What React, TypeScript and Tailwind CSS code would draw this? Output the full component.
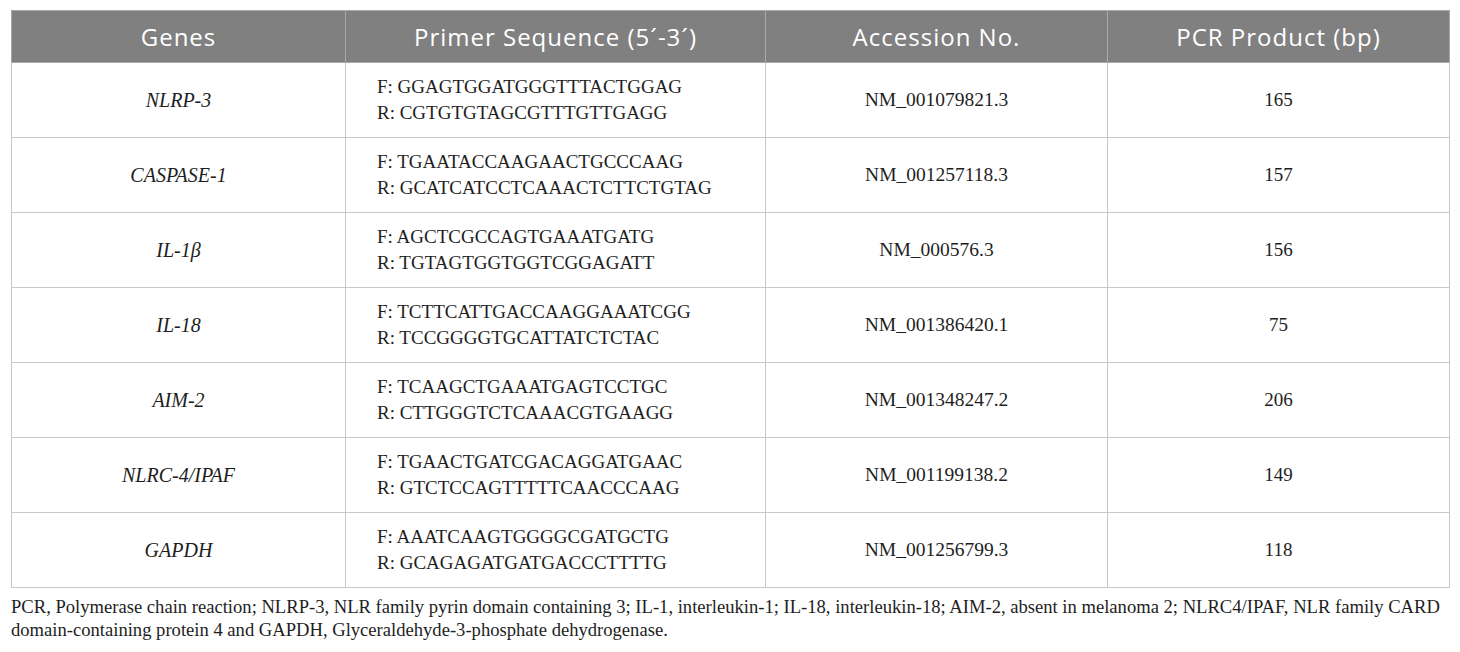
import React from "react";

const rows: [string, string, string, string, string][] = [
  ["NLRP-3", "F: GGAGTGGATGGGTTTACTGGAG", "R: CGTGTGTAGCGTTTGTTGAGG", "NM_001079821.3", "165"],
  ["CASPASE-1", "F: TGAATACCAAGAACTGCCCAAG", "R: GCATCATCCTCAAACTCTTCTGTAG", "NM_001257118.3", "157"],
  ["IL-1\u03B2", "F: AGCTCGCCAGTGAAATGATG", "R: TGTAGTGGTGGTCGGAGATT", "NM_000576.3", "156"],
  ["IL-18", "F: TCTTCATTGACCAAGGAAATCGG", "R: TCCGGGGTGCATTATCTCTAC", "NM_001386420.1", "75"],
  ["AIM-2", "F: TCAAGCTGAAATGAGTCCTGC", "R: CTTGGGTCTCAAACGTGAAGG", "NM_001348247.2", "206"],
  ["NLRC-4/IPAF", "F: TGAACTGATCGACAGGATGAAC", "R: GTCTCCAGTTTTTCAACCCAAG", "NM_001199138.2", "149"],
  ["GAPDH", "F: AAATCAAGTGGGGCGATGCTG", "R: GCAGAGATGATGACCCTTTTG", "NM_001256799.3", "118"],
];

const headers = ["Genes", "Primer Sequence (5\u00B4-3\u00B4)", "Accession No.", "PCR Product (bp)"];

export default function App() {
  return (
    <div className="w-[1460px] h-[652px] bg-white pt-[10px] px-[11px] font-['Liberation_Serif','Times_New_Roman',serif]">
      <table className="border-collapse w-[1438px] table-fixed text-[#1e1e1e] font-['Liberation_Serif','Times_New_Roman',serif]">
        <colgroup>
          <col className="w-[334px]" />
          <col className="w-[420px]" />
          <col className="w-[342px]" />
          <col className="w-[342px]" />
        </colgroup>
        <thead>
          <tr className="h-[52px] bg-[#808080] text-white text-[24px] tracking-[1px] font-['Open_Sans','Noto_Sans',sans-serif]">
            {headers.map((h) => (
              <th key={h} className="border border-[#a8a8a8] font-normal text-center align-middle p-0 leading-[28px]">
                {h}
              </th>
            ))}
          </tr>
        </thead>
        <tbody>
          {rows.map((r, i) => (
            <tr key={i} className="h-[75px]">
              <td className="border border-[#c8c8c8] text-center italic text-[20px] p-0">{r[0]}</td>
              <td className="border border-[#c8c8c8] pl-[31px] text-[19px] leading-[26px] py-0">
                <div>{r[1]}</div>
                <div>{r[2]}</div>
              </td>
              <td className="border border-[#c8c8c8] text-center text-[19.5px] p-0">{r[3]}</td>
              <td className="border border-[#c8c8c8] text-center text-[19px] p-0">{r[4]}</td>
            </tr>
          ))}
        </tbody>
      </table>
      <p className="mt-[7px] text-[18.6px] leading-[23px] text-[#1e1e1e]">
        PCR, Polymerase chain reaction; NLRP-3, NLR family pyrin domain containing 3; IL-1, interleukin-1; IL-18, interleukin-18; AIM-2, absent in melanoma 2; NLRC4/IPAF, NLR family CARD domain-containing protein 4 and GAPDH, Glyceraldehyde-3-phosphate dehydrogenase.
      </p>
    </div>
  );
}
